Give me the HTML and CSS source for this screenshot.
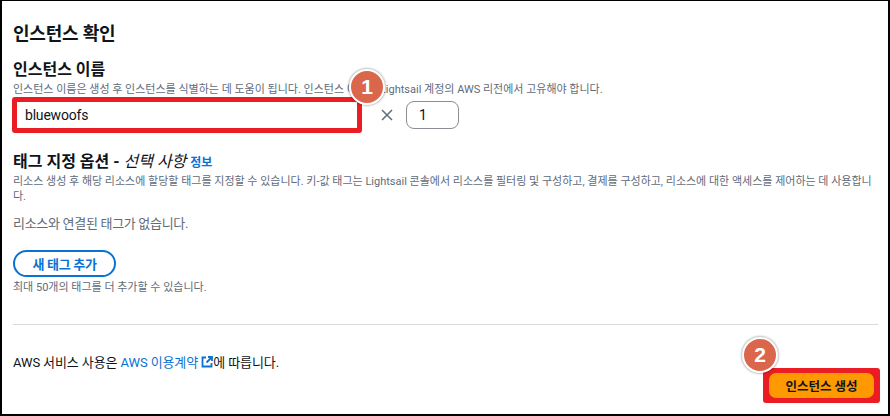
FILE: index.html
```html
<!DOCTYPE html>
<html lang="ko">
<head>
<meta charset="utf-8">
<title>인스턴스 확인</title>
<link rel="stylesheet" href="styles.css">
</head>
<body>
<div class="frame">
  <main class="panel">
    <h1 class="title">인스턴스 확인</h1>

    <section class="field">
      <h2 class="label">인스턴스 이름</h2>
      <p class="desc">인스턴스 이름은 생성 후 인스턴스를 식별하는 데 도움이 됩니다. 인스턴스 이름은 Lightsail 계정의 AWS 리전에서 고유해야 합니다.</p>
      <div class="name-row">
        <div class="hl-box">
          <div class="name-input">bluewoofs</div>
        </div>
        <svg class="times" width="12" height="12" viewBox="0 0 12 12" aria-hidden="true">
          <path d="M1 1 L11 11 M11 1 L1 11" stroke="#5f6b7a" stroke-width="1.5" fill="none"/>
        </svg>
        <div class="count-input">1</div>
        <span class="badge badge-one">1</span>
      </div>
    </section>

    <section class="tags">
      <h2 class="label">태그 지정 옵션 - <i class="opt">선택 사항</i> <a class="info">정보</a></h2>
      <p class="desc tags-desc">리소스 생성 후 해당 리소스에 할당할 태그를 지정할 수 있습니다. 키-값 태그는 Lightsail 콘솔에서 리소스를 필터링 및 구성하고, 결제를 구성하고, 리소스에 대한 액세스를 제어하는 데 사용합니다.</p>
      <p class="empty">리소스와 연결된 태그가 없습니다.</p>
      <button class="add-btn">새 태그 추가</button>
      <p class="note">최대 50개의 태그를 더 추가할 수 있습니다.</p>
    </section>

    <hr class="divider">

    <footer class="actions">
      <p class="terms">AWS 서비스 사용은 <a class="link">AWS 이용계약 <svg class="ext" width="12" height="12" viewBox="0 0 12 12" aria-hidden="true"><path d="M5 1.5 H1.5 V10.5 H10.5 V7" stroke="#0972d3" stroke-width="1.8" fill="none"/><path d="M7 1 H11 V5 M11 1 L5.5 6.5" stroke="#0972d3" stroke-width="1.8" fill="none"/></svg></a>에 따릅니다.</p>
      <div class="create-wrap">
        <button class="create-btn">인스턴스 생성</button>
        <span class="badge badge-two">2</span>
      </div>
    </footer>
  </main>
</div>
</body>
</html>
```

FILE: styles.css
```css
* { box-sizing: border-box; }

html, body {
  margin: 0;
  padding: 0;
  background: #ffffff;
}

body {
  font-family: "Roboto", "Noto Sans CJK KR", sans-serif;
  color: #0f141a;
}

.frame {
  width: 890px;
  height: 416px;
  border-top: 1px solid #000;
  border-left: 2px solid #000;
  border-right: 2px solid #000;
  border-bottom: 2px solid #000;
  overflow: hidden;
}

.panel {
  padding: 21px 10px 0 11px;
}

.title {
  margin: 0;
  font-size: 18px;
  line-height: 24px;
  font-weight: 700;
  letter-spacing: -0.2px;
}

.label {
  margin: 14px 0 0;
  font-size: 16px;
  line-height: 20px;
  font-weight: 700;
  letter-spacing: 0;
}

.desc {
  margin: 2px 0 0;
  font-size: 11px;
  line-height: 15px;
  color: #5f6b7a;
  letter-spacing: 0;
}

.name-row {
  position: relative;
  display: flex;
  align-items: center;
  margin-top: 0;
}

.hl-box {
  margin-left: -1px;
  width: 350px;
  height: 36px;
  background: #ec1c24;
  border-radius: 3px;
  padding: 5px;
}

.name-input {
  height: 100%;
  background: #fff;
  padding-left: 8px;
  font-size: 14px;
  line-height: 26px;
  color: #0f141a;
  letter-spacing: -0.2px;
}

.times {
  margin-left: 19px;
}

.count-input {
  margin-left: 13px;
  width: 53px;
  height: 28px;
  border: 1px solid #8c8c94;
  border-radius: 8px;
  padding-left: 12px;
  font-size: 14px;
  line-height: 26px;
}

.badge {
  position: absolute;
  width: 36px;
  height: 36px;
  border-radius: 50%;
  background: #da664c;
  border: 2px solid #fff;
  box-shadow: 0 0 2px 1px rgba(0, 0, 0, 0.25);
  color: #fff;
  font-family: "Liberation Sans", "Roboto", sans-serif;
  font-weight: 700;
  font-size: 21px;
  line-height: 32px;
  text-align: center;
}

.badge-one {
  left: 336px;
  top: -28px;
}

.tags .label {
  margin-top: 19px;
}

.opt {
  font-weight: 400;
  font-style: italic;
}

.info {
  font-size: 12px;
  font-weight: 700;
  color: #0972d3;
}

.tags-desc {
  margin-top: 1px;
}

.empty {
  margin: 11px 0 0;
  font-size: 13px;
  line-height: 18px;
  color: #5f6b7a;
  letter-spacing: -0.3px;
}

.add-btn {
  display: block;
  margin-top: 17px;
  width: 103px;
  height: 27px;
  border: 2px solid #0972d3;
  border-radius: 20px;
  background: #fff;
  color: #0972d3;
  font-family: inherit;
  font-size: 13px;
  font-weight: 700;
  letter-spacing: -0.3px;
  padding: 0;
}

.note {
  margin: 3px 0 0;
  font-size: 11px;
  line-height: 15px;
  color: #5f6b7a;
  letter-spacing: 0;
}

.divider {
  margin: 29px 0 0;
  border: 0;
  border-top: 1px solid #d5dbdb;
  height: 0;
}

.actions {
  display: flex;
  justify-content: space-between;
  align-items: flex-start;
}

.terms {
  margin: 29px 0 0;
  font-size: 13px;
  line-height: 18px;
  letter-spacing: -0.1px;
}

.link {
  color: #0972d3;
}

.ext {
  vertical-align: -1px;
}

.create-wrap {
  position: relative;
  margin-top: 43px;
  margin-right: -2px;
  background: #ec1c24;
  border-radius: 3px;
  padding: 5px 6px;
}

.create-btn {
  display: block;
  width: 105px;
  height: 25px;
  border: 0;
  border-radius: 7px;
  background: #ff9900;
  color: #0f141a;
  font-family: inherit;
  font-size: 12.5px;
  font-weight: 700;
  letter-spacing: 0;
  padding: 0;
}

.badge-two {
  left: -21px;
  top: -31px;
}
```
